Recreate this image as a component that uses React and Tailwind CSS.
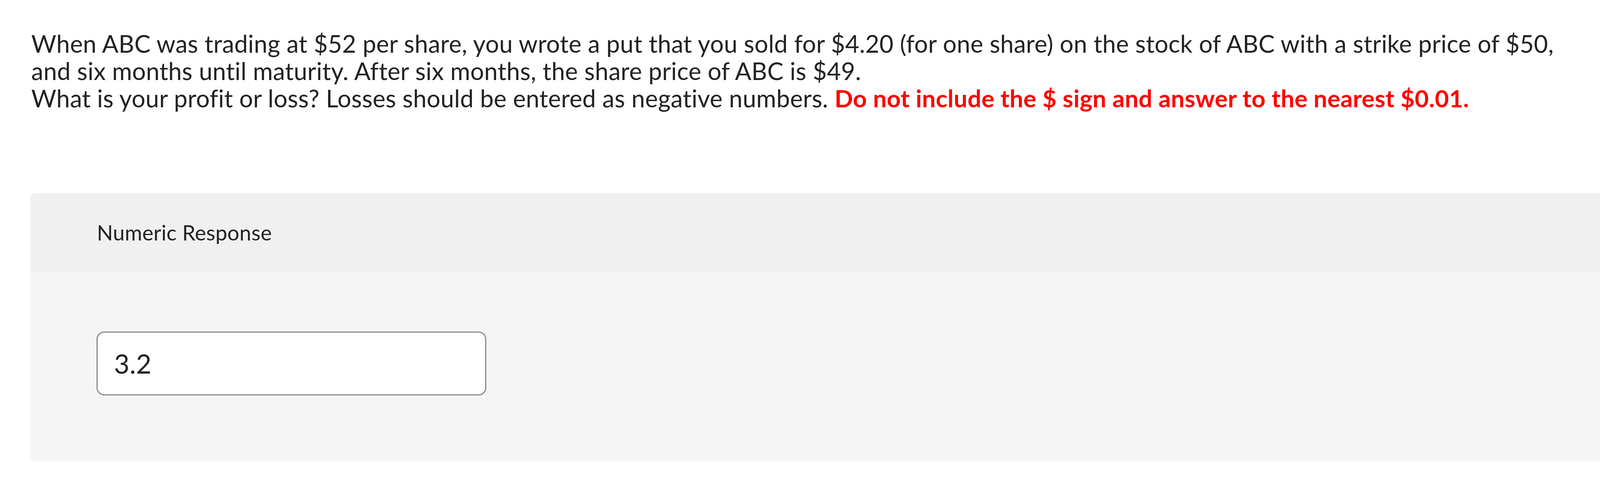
export default function App() {
  return (
    <div
      className="min-h-[1250px] w-full overflow-hidden bg-white text-[#222222] tracking-[0.02em]"
      style={{ fontFamily: 'Lato, "Open Sans", sans-serif' }}
    >
      <div className="pl-[80px] pr-[40px] pt-[76px] text-[62px] leading-[70px]">
        <p>
          When ABC was trading at $52 per share, you wrote a put that you sold for $4.20 (for one share) on the stock of ABC with a strike price of $50, and six months until maturity. After six months, the share price of ABC is $49.
        </p>
        <p>
          What is your profit or loss? Losses should be entered as negative numbers.{' '}
          <span className="font-bold text-[#ff0000]">Do not include the $ sign and answer to the nearest $0.01.</span>
        </p>
      </div>
      <div className="mt-[209px] ml-[78px] overflow-hidden rounded-l-[12px]">
        <div className="flex h-[201px] items-center bg-[#f0f0f0] pl-[170px] text-[54px]">
          Numeric Response
        </div>
        <div className="bg-[#f5f5f5] pb-[169px] pl-[169px] pt-[153px]">
          <div className="flex h-[164px] w-[998px] items-center rounded-[20px] border-[3px] border-[#8c8c8c] bg-white pl-[42px] text-[68px]">
            3.2
          </div>
        </div>
      </div>
    </div>
  );
}
